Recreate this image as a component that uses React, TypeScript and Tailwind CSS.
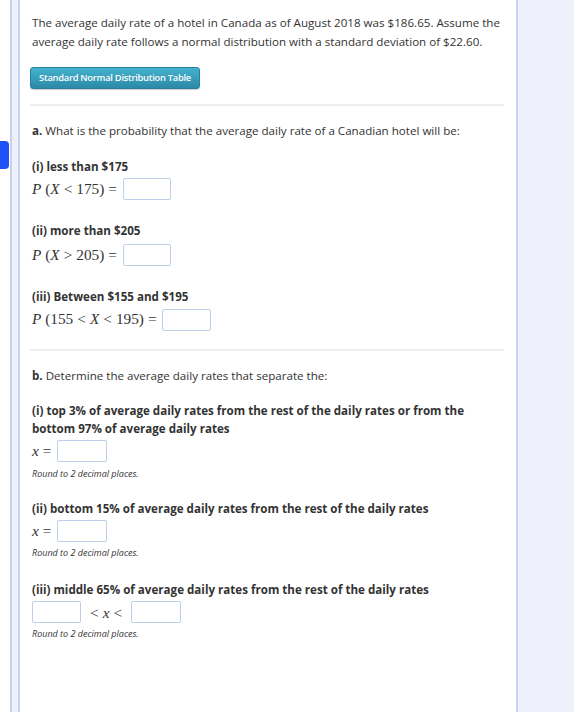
import React from "react";

const Box = ({ w = 48 }: { w?: number }) => (
  <span
    className="inline-block h-[22px] border border-[#bcd0ea] rounded-[2px] bg-white align-middle"
    style={{ width: w }}
  />
);

const Serif = ({ children }: { children: React.ReactNode }) => (
  <span className="font-['Liberation_Serif',serif] text-[15.3px] text-[#333] whitespace-nowrap">{children}</span>
);

const Rel = ({ children }: { children: React.ReactNode }) => (
  <span className="mx-[4px]">{children}</span>
);

export default function App() {
  return (
    <div className="relative flex h-[712px] w-[574px] bg-white font-['Open_Sans',sans-serif] text-[#333] overflow-hidden">
      <div className="w-[10px] shrink-0 bg-white" />
      <div className="w-[10px] shrink-0 border-x-2 border-[#c4d4ee] bg-[#eef1fb]" />
      <div className="w-[496px] shrink-0 bg-white px-[12px]">
        <p className="pt-[13px] text-[11.6px] leading-[19px]">
          The average daily rate of a hotel in Canada as of August 2018 was $186.65. Assume the average daily rate
          follows a normal distribution with a standard deviation of $22.60.
        </p>
        <button className="mt-[16px] -ml-[2px] flex h-[22px] w-[170px] items-center justify-center rounded-[3px] border border-[#2b8099] bg-gradient-to-b from-[#45b2ce] to-[#2a8aa7] text-[9.3px] font-semibold tracking-[-0.25px] text-white shadow-[0_1px_1px_rgba(0,0,0,0.2)]">
          Standard Normal Distribution Table
        </button>
        <div className="mt-[15px] -ml-[2px] h-[2px] w-[474px] bg-[#eeeeee]" />

        <p className="mt-[16px] text-[11.6px] leading-[18px]">
          <b>a.</b> What is the probability that the average daily rate of a Canadian hotel will be:
        </p>

        <p className="mt-[18px] text-[11.6px] font-bold leading-[18px]">(i) less than $175</p>
        <div className="mt-[2px] flex h-[22px] items-center gap-[2px]">
          <Serif>
            <i>P</i>&nbsp;(<i>X</i>
            <Rel>&lt;</Rel>175)
            <Rel>=</Rel>
          </Serif>
          <Box />
        </div>

        <p className="mt-[22px] text-[11.6px] font-bold leading-[18px]">(ii) more than $205</p>
        <div className="mt-[4px] flex h-[22px] items-center gap-[2px]">
          <Serif>
            <i>P</i>&nbsp;(<i>X</i>
            <Rel>&gt;</Rel>205)
            <Rel>=</Rel>
          </Serif>
          <Box />
        </div>

        <p className="mt-[22px] text-[11.6px] font-bold leading-[18px]">(iii) Between $155 and $195</p>
        <div className="mt-[2px] flex h-[23px] items-center gap-[1px]">
          <Serif>
            <i>P</i>&nbsp;(155
            <Rel>&lt;</Rel>
            <i>X</i>
            <Rel>&lt;</Rel>195)
            <Rel>=</Rel>
          </Serif>
          <Box w={49} />
        </div>

        <div className="mt-[18px] -ml-[2px] h-[2px] w-[474px] bg-[#eeeeee]" />

        <p className="mt-[16px] text-[11.6px] leading-[18px]">
          <b>b.</b> Determine the average daily rates that separate the:
        </p>

        <p className="mt-[17px] text-[11.6px] font-bold leading-[18px]">
          (i) top 3% of average daily rates from the rest of the daily rates or from the
          <br />
          bottom 97% of average daily rates
        </p>
        <div className="mt-[2px] flex h-[22px] items-center gap-[2px]">
          <Serif>
            <i>x</i>
            <Rel>=</Rel>
          </Serif>
          <Box w={50} />
        </div>
        <p className="mt-[5px] text-[9px] italic leading-[14px]">Round to 2 decimal places.</p>

        <p className="mt-[19px] text-[11.6px] font-bold leading-[18px]">
          (ii) bottom 15% of average daily rates from the rest of the daily rates
        </p>
        <div className="mt-[2px] flex h-[22px] items-center gap-[2px]">
          <Serif>
            <i>x</i>
            <Rel>=</Rel>
          </Serif>
          <Box w={50} />
        </div>
        <p className="mt-[4px] text-[9px] italic leading-[14px]">Round to 2 decimal places.</p>

        <p className="mt-[21px] text-[11.6px] font-bold leading-[18px]">
          (iii) middle 65% of average daily rates from the rest of the daily rates
        </p>
        <div className="mt-[2px] flex h-[22px] items-center">
          <Box w={49} />
          <span className="ml-[5px] mr-[5px]">
            <Serif>
              <Rel>&lt;</Rel>
              <i>x</i>
              <Rel>&lt;</Rel>
            </Serif>
          </span>
          <Box w={50} />
        </div>
        <p className="mt-[4px] text-[9px] italic leading-[14px]">Round to 2 decimal places.</p>
      </div>
      <div className="w-[2px] shrink-0 bg-[#c4d4ee]" />
      <div className="flex-1 bg-[#eef1fb]" />
      <div className="absolute left-0 top-[141px] h-[28px] w-[9px] rounded-r-[4px] bg-[#1e50f5]" />
    </div>
  );
}
